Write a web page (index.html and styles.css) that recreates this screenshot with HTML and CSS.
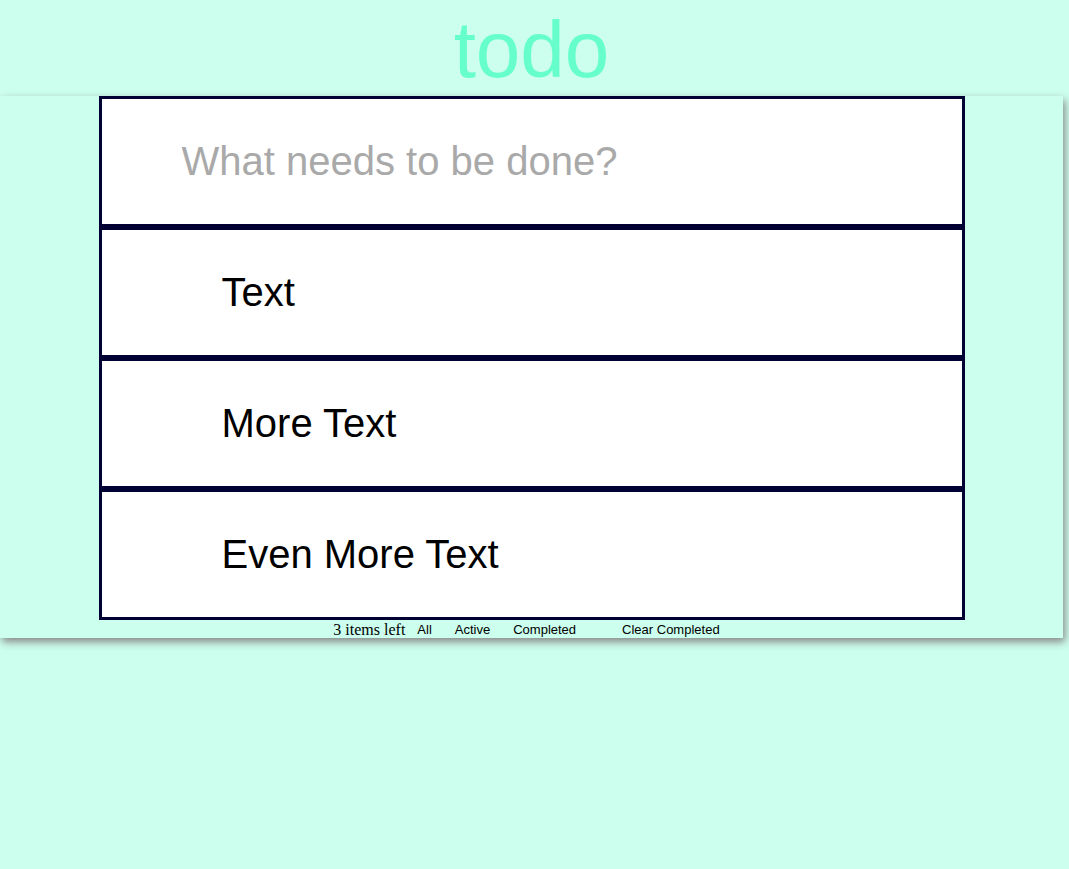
FILE: index.html
```html
<!DOCTYPE html>
<html lang="en">
<head>
<meta charset="utf-8">
<title>todo</title>
<link rel="stylesheet" href="styles.css">
</head>
<body>
<header class="header"><h1 class="title">todo</h1></header>
<main class="panel">
  <input class="box new-todo" type="text" placeholder="What needs to be done?" aria-label="New todo">
  <ul class="list">
    <li class="box item">Text</li>
    <li class="box item">More Text</li>
    <li class="box item">Even More Text</li>
  </ul>
  <footer class="footer">
    <span class="count">3 items left</span>
    <div class="filters">
      <button class="btn" type="button">All</button>
      <button class="btn" type="button">Active</button>
      <button class="btn" type="button">Completed</button>
    </div>
    <button class="btn" type="button">Clear Completed</button>
  </footer>
</main>
</body>
</html>
```
FILE: styles.css
```css
* {
  box-sizing: border-box;
}

body {
  min-height: 100vh;
  margin: 0;
  padding-right: 6px;
  background: #ccffee;
  color: #000;
  font-family: "Liberation Serif", "Times New Roman", serif;
  font-size: 16px;
}

.title {
  margin: 0;
  padding: 4px 0 0;
  color: #66ffcc;
  font: 400 80px/92px "Liberation Sans", Arial, sans-serif;
  text-align: center;
}

.panel {
  display: flex;
  flex-direction: column;
  align-items: center;
  background: #ccffee;
  box-shadow: 2px 4px 8px #888;
}

.box {
  display: block;
  width: 100%;
  margin: 0;
  border: 3px solid #000033;
  border-radius: 0;
  background: #fff;
  color: #000;
  font: 400 40px/45px "Liberation Sans", Arial, sans-serif;
}

.new-todo {
  max-width: 866px;
  padding: 40px 80px;
  outline: none;
}

.new-todo::placeholder {
  color: #a9a9a9;
  opacity: 1;
}

.list {
  width: 100%;
  max-width: 866px;
  margin: 0;
  padding: 0;
  list-style: none;
}

.item {
  padding: 40px 120px;
}

.footer {
  display: flex;
  align-items: center;
  padding: 2px 10px 0 0;
  line-height: 16px;
}

.count {
  margin-right: 12px;
}

.filters {
  display: flex;
  gap: 23px;
  margin-right: 46px;
}

.btn {
  padding: 0;
  border: 0;
  background: none;
  color: #000;
  font: 400 13px/16px "Liberation Sans", Arial, sans-serif;
}
```
